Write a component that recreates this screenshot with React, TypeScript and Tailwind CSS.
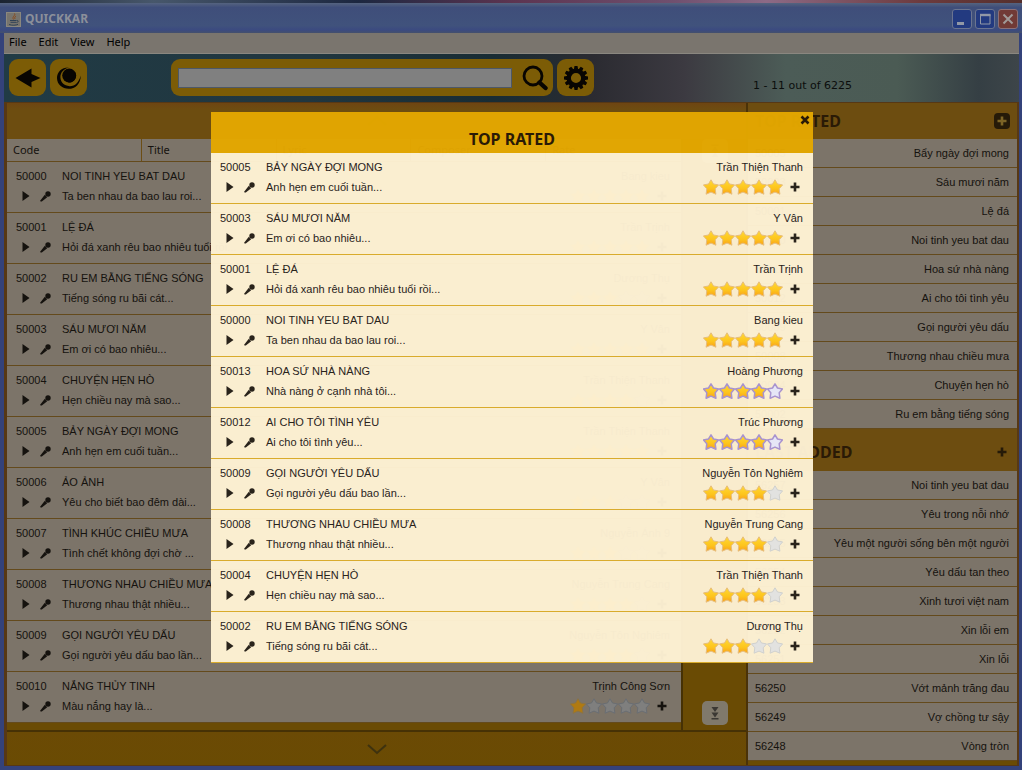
import React from "react";

type Song = {
  code: string;
  title: string;
  lyric: string;
  composer: string;
  rate: number;
  hot?: boolean;
};

const songs: Song[] = [
  { code: "50000", title: "NOI TINH YEU BAT DAU", lyric: "Ta ben nhau da bao lau roi...", composer: "Bang kieu", rate: 5 },
  { code: "50001", title: "LỆ ĐÁ", lyric: "Hỏi đá xanh rêu bao nhiêu tuổi rồi...", composer: "Trần Trịnh", rate: 5 },
  { code: "50002", title: "RU EM BẰNG TIẾNG SÓNG", lyric: "Tiếng sóng ru bãi cát...", composer: "Dương Thụ", rate: 3 },
  { code: "50003", title: "SÁU MƯƠI NĂM", lyric: "Em ơi có bao nhiêu...", composer: "Y Vân", rate: 5 },
  { code: "50004", title: "CHUYỆN HẸN HÒ", lyric: "Hẹn chiều nay mà sao...", composer: "Trần Thiện Thanh", rate: 4 },
  { code: "50005", title: "BẢY NGÀY ĐỢI MONG", lyric: "Anh hẹn em cuối tuần...", composer: "Trần Thiện Thanh", rate: 5 },
  { code: "50006", title: "ẢO ẢNH", lyric: "Yêu cho biết bao đêm dài...", composer: "Y Vân", rate: 3 },
  { code: "50007", title: "TÌNH KHÚC CHIỀU MƯA", lyric: "Tình chết không đợi chờ ...", composer: "Nguyễn Ánh 9", rate: 3 },
  { code: "50008", title: "THƯƠNG NHAU CHIỀU MƯA", lyric: "Thương nhau thật nhiều...", composer: "Nguyễn Trung Cang", rate: 4 },
  { code: "50009", title: "GỌI NGƯỜI YÊU DẤU", lyric: "Gọi người yêu dấu bao lần...", composer: "Nguyễn Tôn Nghiêm", rate: 4 },
  { code: "50010", title: "NẮNG THỦY TINH", lyric: "Màu nắng hay là...", composer: "Trịnh Công Sơn", rate: 1 },
];

const topRated: Song[] = [
  songs[5],
  songs[3],
  songs[1],
  songs[0],
  { code: "50013", title: "HOA SỨ NHÀ NÀNG", lyric: "Nhà nàng ở cạnh nhà tôi...", composer: "Hoàng Phương", rate: 4, hot: true },
  { code: "50012", title: "AI CHO TÔI TÌNH YÊU", lyric: "Ai cho tôi tình yêu...", composer: "Trúc Phương", rate: 4, hot: true },
  songs[9],
  songs[8],
  songs[4],
  songs[2],
];

const topList: [string, string][] = [
  ["50005", "Bẩy ngày đợi mong"],
  ["50003", "Sáu mươi năm"],
  ["50001", "Lệ đá"],
  ["50000", "Noi tinh yeu bat dau"],
  ["50013", "Hoa sứ nhà nàng"],
  ["50012", "Ai cho tôi tình yêu"],
  ["50009", "Gọi người yêu dấu"],
  ["50008", "Thương nhau chiều mưa"],
  ["50004", "Chuyện hẹn hò"],
  ["50002", "Ru em bằng tiếng sóng"],
];

const addedList: [string, string][] = [
  ["56257", "Noi tinh yeu bat dau"],
  ["56256", "Yêu trong nỗi nhớ"],
  ["56255", "Yêu một người sống bên một người"],
  ["56254", "Yêu dấu tan theo"],
  ["56253", "Xinh tươi việt nam"],
  ["56252", "Xin lỗi em"],
  ["56251", "Xin lỗi"],
  ["56250", "Vớt mảnh trăng đau"],
  ["56249", "Vợ chồng tư sậy"],
  ["56248", "Vòng tròn"],
];

const starPath = "M8 0.8 L10.5 5 L15.6 5.9 L12.2 9.8 L12.9 15.2 L8 13.1 L3.1 15.2 L3.8 9.8 L0.4 5.9 L5.5 5 Z";

function Stars({ rate, hot, dim }: { rate: number; hot?: boolean; dim?: boolean }) {
  return (
    <span className="flex" role="img" aria-label={`${rate} of 5`}>
      {[1, 2, 3, 4, 5].map((n) => {
        const on = n <= rate;
        const fill = on ? (dim ? "#b07a12" : "url(#gold)") : dim ? "#7f7f7e" : hot ? "#e6e6f6" : "#e2e2e0";
        const stroke = hot ? "#a893cf" : on ? (dim ? "#8e7440" : "#e6bd7c") : dim ? "#6a6e73" : "#cfd0ce";
        return (
          <svg key={n} className="size-4" viewBox="0 0 16 16">
            <defs>
              <linearGradient id="gold" x1="0" y1="0" x2="0" y2="1">
                <stop offset="0" stopColor="#ffd935" />
                <stop offset="0.6" stopColor="#fdc41c" />
                <stop offset="1" stopColor="#f9a01c" />
              </linearGradient>
            </defs>
            <path d={starPath} fill={fill} stroke={stroke} strokeWidth={hot ? 1.5 : 1} strokeLinejoin="round" />
          </svg>
        );
      })}
    </span>
  );
}

function PlusIcon() {
  return (
    <svg className="size-2.5" viewBox="0 0 10 10">
      <path d="M5 0.5V9.5M0.5 5H9.5" stroke="currentColor" strokeWidth="2.6" />
    </svg>
  );
}

function SongRow({ song, dim }: { song: Song; dim?: boolean }) {
  return (
    <li
      className={
        dim
          ? "flex h-[51px] justify-between border-b border-[#644a1c] bg-[#7c7469] pt-1 pr-[11px] pl-[9px] text-[#15120e]"
          : "flex h-[51px] justify-between border-b border-[#d9ab2c] bg-[#fef2d4]/97 pt-1 pr-2.5 pl-[9px] text-[#29231b]"
      }
    >
      <div className="grid min-w-0 grid-cols-[46px_1fr] grid-rows-[20px_20px] items-center whitespace-nowrap">
        <span>{song.code}</span>
        <span>{song.title}</span>
        <span className="flex items-center gap-2.5 pl-1.5">
          <button aria-label={`Play ${song.title}`}>
            <svg className="h-2.5 w-2" viewBox="0 0 8 10">
              <path d="M0.5 0L7.5 5L0.5 10Z" fill="currentColor" />
            </svg>
          </button>
          <button aria-label={`Sing ${song.title}`}>
            <svg className="size-[11px]" viewBox="0 0 11 11">
              <circle cx="8" cy="3" r="2.7" fill="currentColor" />
              <path d="M4.8 3.8L7.2 6.2L1.8 10.6L0.4 10.4L0.5 9.2Z" fill="currentColor" />
            </svg>
          </button>
        </span>
        <span>{song.lyric}</span>
      </div>
      <div className="grid grid-rows-[20px_20px] items-center justify-items-end whitespace-nowrap">
        <span>{song.composer}</span>
        <span className="flex items-center gap-[7px] pr-[3px]">
          <Stars rate={song.rate} hot={song.hot} dim={dim} />
          <button aria-label={`Add ${song.title}`}>
            <PlusIcon />
          </button>
        </span>
      </div>
    </li>
  );
}

function SideList({ rows }: { rows: [string, string][] }) {
  return (
    <ul>
      {rows.map(([code, title]) => (
        <li
          key={code}
          className="flex h-[29px] items-center justify-between border-b border-[#644a1c] bg-[#7c7469] pr-2 pl-[7px] text-[#15120e]"
        >
          <span>{code}</span>
          <span>{title}</span>
        </li>
      ))}
    </ul>
  );
}

function Chevron({ up }: { up?: boolean }) {
  return (
    <svg className="h-3 w-5" viewBox="0 0 20 12">
      <path d={up ? "M1 10L10 2L19 10" : "M1 2L10 10L19 2"} fill="none" stroke="#3e320f" strokeWidth="2" />
    </svg>
  );
}

function JumpButton({ label, up }: { label: string; up?: boolean }) {
  return (
    <button aria-label={label} className="flex h-6 w-[26px] items-center justify-center rounded-[5px] bg-[#80796b]">
      <svg className={up ? "h-3.5 w-2 rotate-180" : "h-3.5 w-2"} viewBox="0 0 8 14">
        <path d="M0.5 1H7.5L4 6ZM0.5 6.5H7.5L4 11.5ZM0.5 12H7.5V13.5H0.5Z" fill="#3b3833" />
      </svg>
    </button>
  );
}

const toolButton = "flex size-[37px] shrink-0 items-center justify-center rounded-[9px] bg-[#7c5c06]";
const heading = "font-['Noto_Sans','Open_Sans',sans-serif] text-base leading-5 font-bold text-[#2a1a06]";

export default function App() {
  return (
    <div className="relative flex min-h-screen flex-col bg-[#34427a] font-['Liberation_Sans',Arial,sans-serif] text-[11px] leading-[14px]">
      <div className="h-[3px] bg-[linear-gradient(90deg,#1b2330,#47576b_15%,#1c2740_35%,#5c3450_50%,#70506f_66%,#8d6a86_75%,#6d3b3e_90%,#552f2c)]" />

      <header className="flex h-[30px] items-center gap-1 bg-[linear-gradient(180deg,#55637f,#3f4e7a_15%,#40527c_75%,#3b4a80_90%,#44506c)] pt-0.5 pr-1 pl-1.5">
        <svg className="size-[15px]" viewBox="0 0 15 15">
          <rect x="0.5" y="0.5" width="14" height="14" fill="#77746d" stroke="#8a877e" />
          <path d="M8.5 1.5C10 3.5 5.5 4.5 7.5 7.5M10 4C8.5 5 8.5 5.5 9 7" stroke="#8a4a1c" fill="none" />
          <path d="M4 8.5H10.5M4.5 10.3H10M3 12.5C6 13.6 10 13.4 12 12.3M10.8 8.5C13 8.2 12.3 10.4 10.4 10.6" stroke="#2f4257" fill="none" />
        </svg>
        <h1 className="grow font-['Noto_Sans',sans-serif] text-[12px] font-bold text-[#8b8f9a]">QUICKKAR</h1>
        <div className="flex gap-[3px]">
          <button aria-label="Minimize" className="flex size-5 rounded-[3px] border border-[#6b7490] bg-[#233a80]">
            <svg viewBox="0 0 18 18">
              <path d="M4 13.5H11" stroke="#9298a6" strokeWidth="3" />
            </svg>
          </button>
          <button aria-label="Maximize" className="flex size-5 rounded-[3px] border border-[#6b7490] bg-[#233a80]">
            <svg viewBox="0 0 18 18">
              <path d="M4.5 4.5H14V14H4.5Z" stroke="#9298a6" fill="none" />
              <path d="M4 5H14.5" stroke="#9298a6" strokeWidth="2.4" />
            </svg>
          </button>
          <button aria-label="Close" className="flex size-5 rounded-[3px] border border-[#8b7078] bg-[#713a36]">
            <svg viewBox="0 0 18 18">
              <path d="M4.5 4.5L13.5 13.5M13.5 4.5L4.5 13.5" stroke="#a09a98" strokeWidth="2" />
            </svg>
          </button>
        </div>
      </header>

      <div className="flex grow flex-col pr-[3px] pb-1 pl-1">
        <nav className="flex h-[21px] items-center gap-3 border-b border-[#8a8780] bg-[#7a756e] pb-0.5 pl-[5px] font-['Noto_Sans',sans-serif] text-[11px] text-black">
          <button>File</button>
          <button>Edit</button>
          <button>View</button>
          <button>Help</button>
        </nav>

        <div className="flex h-12 items-start gap-1 bg-[linear-gradient(90deg,#213b45,#20363f_30%,#182c34_48%,#2b2b31_58%,#3c3a41_67%,#4c5c57_77%,#4b5b54_88%,#353f44_96%,#3d4549)] pt-[5px] pl-[5px]">
          <button aria-label="Back" className={toolButton}>
            <svg className="h-5 w-[26px]" viewBox="0 0 26 20">
              <path d="M0.5 10L16.5 0.5L16.5 6L25.5 10L16.5 14L16.5 19.5Z" fill="#080502" />
            </svg>
          </button>
          <button aria-label="Refresh" className={toolButton}>
            <svg className="h-6 w-[26px]" viewBox="0 0 26 24">
              <path
                d="M13 1.4C5.5 1.2 1 6 1 12C1 18.4 6.4 22.8 12.6 22.8C19.4 22.8 24.4 18 24.9 9.4C22.6 16.4 19 20.4 13.6 20.2C8 20 4.6 16.4 4.4 11.6C4.2 6.6 7.6 2.6 13 1.4Z"
                fill="#080502"
              />
              <circle cx="13.2" cy="9.6" r="7" fill="#080502" />
              <path d="M18.6 5C21.4 9.5 20 14.6 15 16.4L12 16.4L19 9Z" fill="#080502" />
            </svg>
          </button>
          <form
            role="search"
            onSubmit={(e) => e.preventDefault()}
            className="ml-20 flex h-[37px] w-[382px] items-center rounded-[9px] bg-[#7c5c06] pr-[5px] pl-[7px]"
          >
            <input
              type="text"
              aria-label="Search songs"
              className="h-5 min-w-0 grow border border-[#4d5868] bg-[#808080] px-1 outline-none"
            />
            <button aria-label="Search" className="ml-2.5 shrink-0">
              <svg className="size-[26px]" viewBox="0 0 26 26">
                <circle cx="11" cy="11" r="9" fill="none" stroke="#080502" strokeWidth="2.8" />
                <path d="M17.5 17.5L23.5 23" stroke="#080502" strokeWidth="4.4" strokeLinecap="round" />
              </svg>
            </button>
          </form>
          <button aria-label="Settings" className={toolButton}>
            <svg className="size-[26px]" viewBox="-13 -13 26 26">
              {[0, 30, 60, 90, 120, 150, 180, 210, 240, 270, 300, 330].map((a) => (
                <path key={a} d="M-2.2 -8L-1.5 -12H1.5L2.2 -8Z" transform={`rotate(${a})`} fill="#080502" />
              ))}
              <circle r="7.3" fill="none" stroke="#080502" strokeWidth="4.4" />
            </svg>
          </button>
          <p className="ml-auto w-[266px] pt-5 font-['DejaVu_Sans',sans-serif] text-[11px] text-[#0b0e0d]">1 - 11 out of 6225</p>
        </div>

        <main className="flex grow gap-0.5 border-t border-r-2 border-b border-l-[3px] border-[#573815] bg-[#4a3208]">
          <section className="flex min-w-0 grow flex-col">
            <button aria-label="Previous page" className="flex h-9 items-center justify-center bg-[linear-gradient(180deg,#6e4512,#6d4d10_20%,#6d4d10)]">
              <Chevron up />
            </button>
            <div className="flex bg-[#6a4b04]">
              <div className="min-w-0 grow border-r-2 border-[#463105] pb-[7px]">
                <div className="grid h-[23px] grid-cols-5 border-b border-[#644a1c] bg-[#7c7469] font-['Noto_Sans',sans-serif] text-[#15120e]">
                  <button className="border-r border-[#6c4d14] pl-1.5 text-left">Code</button>
                  <button className="border-r border-[#6c4d14] pl-1.5 text-left">Title</button>
                  <button className="border-r border-[#6c4d14] pl-1.5 text-left">Lyric</button>
                  <button className="border-r border-[#6c4d14] pl-1.5 text-left">Composer</button>
                  <button className="pl-1.5 text-left">Rate</button>
                </div>
                <ul>
                  {songs.map((s) => (
                    <SongRow key={s.code} song={s} dim />
                  ))}
                </ul>
              </div>
              <div className="flex w-[63px] shrink-0 flex-col items-center justify-between pb-[5px]">
                <JumpButton label="First page" up />
                <JumpButton label="Last page" />
              </div>
            </div>
            <button
              aria-label="Next page"
              className="flex grow items-center justify-center border-t-2 border-[#463105] bg-[linear-gradient(180deg,#6b4a05,#6a4b03)]"
            >
              <Chevron />
            </button>
          </section>

          <aside className="w-[269px] shrink-0 bg-[#6a4b04]">
            <div className="flex h-9 items-center justify-between bg-[#6d4d10] px-[7px]">
              <h2 className={heading}>TOP RATED</h2>
              <button aria-label="Show all top rated" className="flex size-4 items-center justify-center rounded-[4px] bg-[#251a08] text-[#7c6426]">
                <PlusIcon />
              </button>
            </div>
            <SideList rows={topList} />
            <div className="flex h-[42px] items-center justify-between bg-[#6d4d10] pt-1 pr-2.5 pl-[7px]">
              <h2 className={heading}>LAST ADDED</h2>
              <button aria-label="Show all last added" className="text-[#251a08]">
                <PlusIcon />
              </button>
            </div>
            <SideList rows={addedList} />
          </aside>
        </main>
      </div>

      <div className="absolute inset-0 flex items-start justify-center pt-28 pl-0.5">
        <section role="dialog" aria-labelledby="dialog-title" className="w-[602px]">
          <header className="relative flex h-[41px] items-end justify-center bg-[#e4a700]/97 pb-1">
            <h2 id="dialog-title" className={heading}>
              TOP RATED
            </h2>
            <button aria-label="Close dialog" className="absolute top-[3px] right-[3px] text-[#2a1a06]">
              <svg className="size-2.5" viewBox="0 0 10 10">
                <path d="M1.5 1.5L8.5 8.5M8.5 1.5L1.5 8.5" stroke="currentColor" strokeWidth="2.6" />
              </svg>
            </button>
          </header>
          <ul>
            {topRated.map((s) => (
              <SongRow key={s.code} song={s} />
            ))}
          </ul>
        </section>
      </div>
    </div>
  );
}
